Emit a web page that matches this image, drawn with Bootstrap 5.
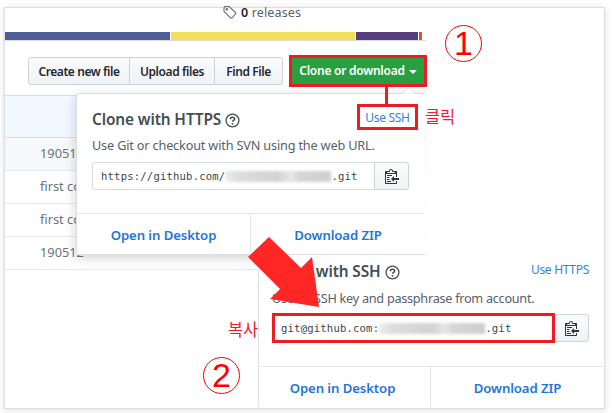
<!DOCTYPE html>
<html lang="ko">
<head>
<meta charset="utf-8">
<meta name="viewport" content="width=device-width, initial-scale=1">
<title>Clone or download</title>
<link href="https://cdn.jsdelivr.net/npm/bootstrap@5.3.0/dist/css/bootstrap.min.css" rel="stylesheet">
<style>
body{width:613px;height:413px;overflow:hidden;background:#fff;font-family:"Noto Sans","Open Sans","Noto Sans CJK KR",sans-serif;color:#24292e;font-size:12px;line-height:16px}
.frame{width:601px;height:402px;margin:7px 0 0 4px;border:1px solid #dedede;box-shadow:0 1px 6px rgba(0,0,0,.14)}
.repo{width:421px}
.releases{height:24px;padding-left:218px;font-size:12.5px;line-height:10px;color:#586069;letter-spacing:.15px}
.releases svg{margin-top:-2px}
.releases b{color:#24292e;font-weight:600}
.langs{height:9px;border-bottom:1px solid #ddd;gap:1px}
.langs span{height:8px}
.l1{width:165px;background:#4f5d95}.l2{width:184px;background:#f1e05a}.l3{width:62px;background:#563d7c}.l4{width:3px;background:#e34c26}
.tools{height:54px;padding:16px 0 0 23px}
.gh{height:28px;padding:0;border:1px solid #cfd3d7;border-radius:3px;background:linear-gradient(#fafbfc,#eff3f6);font-size:12px;font-weight:600;line-height:27px;color:#24292e;letter-spacing:-.42px}
.gh.green,.gh.green:hover{background:#28a03f;color:#fff;border:3px solid #ed1c24;border-radius:0;width:138px;height:32px;line-height:26px;margin:-2px 0 0 6px;letter-spacing:-.25px}
.green:after{vertical-align:1px!important;margin-left:4px!important;border-width:4px 4px 0!important}
.commits>div{height:33px;padding-left:35px;border-bottom:1px solid #e6e9ec;font-size:12.8px;line-height:31px;color:#6a737d;letter-spacing:0}
.commits .head{height:43px;background:#f1f8ff;border-top:1px solid #c8e1ff;border-bottom-color:#c8e1ff}
.commits .alt{background:#f6f8fa}
.clip{left:60px;top:80px;width:365px;height:188px;overflow:hidden}
.pop{background:#fff;color:#444d56}
.pop1{left:16px;top:13px;width:371px;height:162px;border:1px solid #dcdee0;border-radius:4px 0 0 2px;box-shadow:0 3px 12px rgba(27,31,35,.2)}
.pop2{left:258px;top:255px;width:346px;height:152px}
.pop2:before{content:"";position:absolute;left:0;top:14px;bottom:0;border-left:1px solid #dfe2e5}
.ttl{font-size:15.4px;font-weight:600;line-height:20px;letter-spacing:-.12px;color:#444d56}
.sub{font-size:12.7px;letter-spacing:-.17px;line-height:18px;color:#586069}
.pop2 .sub{letter-spacing:-.28px}
.lnk{font-size:12px;color:#2f83df;letter-spacing:-.3px}
.field{height:28px;border:1px solid #d8dbde;border-radius:3px 0 0 3px;font-family:"DejaVu Sans Mono",monospace;font-size:10.6px;line-height:24px;color:#40464c;padding-left:8px;letter-spacing:.17px}
.smudge{width:106px;height:11px;background:linear-gradient(90deg,#eee,#ddd 12%,#d2d2d2 50%,#e6e6e6 62%,#d6d6d6 70%,#cecece);filter:blur(1.5px)}
.copy{width:35px;border-radius:0 3px 3px 0;margin-left:-1px}
.foot{border-top:1px solid #e4e7ea;font-weight:600;font-size:13.2px;letter-spacing:-.1px;color:#1f75d8}
.foot a{color:inherit;text-decoration:none;padding-top:1px}
.foot .split{border-left:1px solid #e1e4e8}
.redbox{border:3px solid #ed1c24}
.ko{font-family:"Noto Sans CJK KR",sans-serif;color:#f01c28;font-size:16.5px;line-height:20px;font-weight:400;letter-spacing:-.3px}
.mark-no{width:37px;height:37px;border:1.5px solid #f00;border-radius:50%;color:#f00;font-family:"Liberation Sans",sans-serif;font-size:34px;line-height:35px;text-align:center;font-weight:400}
.notes{left:0;top:0;pointer-events:none}
</style>
<script src="https://cdn.jsdelivr.net/npm/bootstrap@5.3.0/dist/js/bootstrap.bundle.min.js"></script>
</head>
<body class="position-relative">
<svg class="d-none">
<symbol id="help" viewBox="0 0 14 14"><circle cx="7" cy="7" r="6" fill="none" stroke="#444d56" stroke-width="1.2"/><path d="M5 5.8C5 3.4 9 3.4 9 5.6C9 6.8 7 6.9 7 8.2M7 9.4V10.8" fill="none" stroke="#444d56" stroke-width="1.4"/></symbol>
<symbol id="clip" viewBox="0 0 14 16"><path d="M2 13h4v1H2v-1zm5-6H2v1h5V7zm2 3V8l-3 3 3 3v-2h5v-2H9zM4.500 9H2v1h2.500V9zM2 12h2.500v-1H2v1zm9 1h1v2c-.02.28-.11.52-.3.700-.19.180-.42.280-.7.300H1c-.55 0-1-.45-1-1V4c0-.55.45-1 1-1h3c0-1.110.89-2 2-2 1.110 0 2 .89 2 2h3c.55 0 1 .45 1 1v5h-1V6H1v9h10v-2zM2 5h8c0-.55-.45-1-1-1H8c-.55 0-1-.45-1-1s-.45-1-1-1-1 .45-1 1-.45 1-1 1H3c-.55 0-1 .45-1 1z" fill="#30363c"/></symbol>
</svg>
<main class="frame d-flow-root">
 <div class="repo">
  <div class="releases d-flex"><svg width="14" height="13" viewBox="0 0 14 13" fill="none" stroke="#6a737d" stroke-width="1.1"><path d="M1 1.500V5.500L7.500 11.800C8 12.200 8.500 12.200 9 11.800L12.500 8C13 7.500 13 7 12.500 6.500L6 .500H2Z"/><circle cx="3.800" cy="3.300" r=".8"/></svg><span class="ms-1"><b>0</b> releases</span></div>
  <div class="langs d-flex"><span class="l1"></span><span class="l2"></span><span class="l3"></span><span class="l4"></span></div>
  <div class="tools d-flex">
   <div class="btn-group align-items-start"><button class="btn gh" style="width:102px">Create new file</button><button class="btn gh" style="width:86px">Upload files</button><button class="btn gh" style="width:69px">Find File</button></div>
   <button class="btn gh green flex-shrink-0 dropdown-toggle">Clone or download</button>
  </div>
  <div class="commits"><div class="head"></div><div class="alt">190512</div><div>first commit</div><div>first commit</div><div>190512</div></div>
 </div>
</main>
<div class="clip position-absolute">
 <section class="pop pop1 position-absolute d-flex flex-column">
  <div class="flex-grow-1" style="padding:16px 0 0 15px">
   <div class="d-flex align-items-center"><span class="ttl">Clone with HTTPS</span><svg width="15" height="15" class="ms-1"><use href="#help"/></svg></div>
   <div class="sub" style="margin-top:6px">Use Git or checkout with SVN using the web URL.</div>
   <div class="d-flex" style="margin-top:8px"><div class="field d-flex align-items-center" style="width:283px">https://github.com/<span class="smudge"></span>.git</div><button class="btn gh copy"><svg width="14" height="16" class="d-block mx-auto"><use href="#clip"/></svg></button></div>
  </div>
  <div class="foot d-flex" style="height:41px"><a href="#" class="d-flex align-items-center justify-content-center" style="width:173px">Open in Desktop</a><a href="#" class="split d-flex align-items-center justify-content-center" style="width:175px">Download ZIP</a></div>
 </section>
</div>
<section class="pop pop2 position-absolute d-flex flex-column">
 <div class="flex-grow-1" style="padding:7px 15px 0 14px">
  <div class="d-flex align-items-center"><span class="ttl" style="margin-left:-2px">Clone with SSH</span><svg width="15" height="15" class="ms-1"><use href="#help"/></svg><a class="lnk ms-auto text-decoration-none" href="#" style="margin-top:-5px">Use HTTPS</a></div>
  <div class="sub" style="margin-top:7px">Use an SSH key and passphrase from account.</div>
  <div class="d-flex" style="margin-top:7px"><div class="field d-flex align-items-center" style="width:283px">git@github.com:<span class="smudge"></span>.git</div><button class="btn gh copy"><svg width="14" height="16" class="d-block mx-auto"><use href="#clip"/></svg></button></div>
 </div>
 <div class="foot d-flex" style="height:41px"><a href="#" class="d-flex align-items-center justify-content-center" style="width:169px">Open in Desktop</a><a href="#" class="split d-flex align-items-center justify-content-center" style="width:174px;margin-left:3px">Download ZIP</a></div>
</section>
<svg class="notes position-absolute" width="613" height="413">
 <path d="M402 93.500L408.500 87L415 93.500" fill="#fff" stroke="#dcdee0"/><path d="M386.500 86V105" stroke="#ed1c24" stroke-width="3"/>
 <path d="M269 237L301 268L312 257L319 307L270 299L280 289L248 257Z" fill="#ff2626"/>
</svg>
<div class="position-absolute redbox bg-white lnk text-center" style="left:357px;top:104px;width:61px;height:26px;line-height:21px">Use SSH</div>
<div class="position-absolute redbox" style="left:272px;top:313px;width:283px;height:30px"></div>
<div class="position-absolute ko" style="left:425px;top:106px">클릭</div>
<div class="position-absolute ko" style="left:228px;top:319px">복사</div>
<div class="position-absolute mark-no" style="left:445px;top:25px">1</div>
<div class="position-absolute mark-no" style="left:203px;top:357px">2</div>
</body>
</html>
